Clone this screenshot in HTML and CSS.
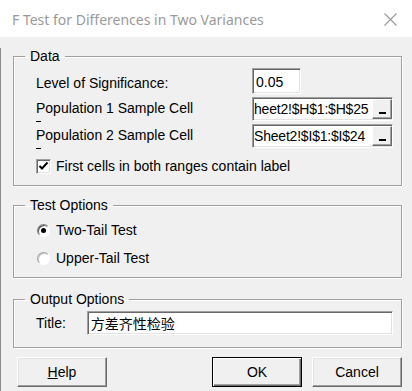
FILE: index.html
```html
<!DOCTYPE html>
<html lang="en">
<head>
    <meta charset="UTF-8" />
    <meta name="viewport" content="width=device-width, initial-scale=1.0" />
    <title>F Test for Differences in Two Variances</title>
    <link rel="stylesheet" href="styles.css">
</head>
<body>

<div class="dialog">
    <div class="titlebar">
        <span class="caption">F Test for Differences in Two Variances</span>
        <svg class="close" width="13" height="13" viewBox="0 0 13 13">
            <path d="M0.5 0.5 L12.5 12.5 M12.5 0.5 L0.5 12.5" stroke="#9a9a9a" stroke-width="1.1" fill="none"/>
        </svg>
    </div>

    <div class="client">
        <!-- Data -->
        <fieldset class="group data">
            <legend>Data</legend>
            <div class="data-grid">
                <label class="lbl first">Level of Significance:</label>
                <div class="edit level">0.05</div>

                <label class="lbl dashed">Population 1 Sample Cell</label>
                <div class="refedit">
                    <div class="ref-text"><span>heet2!$H$1:$H$25</span></div>
                    <span class="ref-btn"><i></i></span>
                </div>

                <label class="lbl dashed">Population 2 Sample Cell</label>
                <div class="refedit">
                    <div class="ref-text"><span>Sheet2!$I$1:$I$24</span></div>
                    <span class="ref-btn"><i></i></span>
                </div>

                <label class="check-row">
                    <span class="checkbox">
                        <svg width="11" height="11" viewBox="0 0 11 11">
                            <path d="M1.5 5 L4 7.5 L9.5 1.5" stroke="#000" stroke-width="2" fill="none"/>
                        </svg>
                    </span>
                    First cells in both ranges contain label
                </label>
            </div>
        </fieldset>

        <!-- Test Options -->
        <fieldset class="group tests">
            <legend>Test Options</legend>
            <label class="radio-row"><span class="radio checked"></span>Two-Tail Test</label>
            <label class="radio-row"><span class="radio"></span>Upper-Tail Test</label>
        </fieldset>

        <!-- Output Options -->
        <fieldset class="group output">
            <legend>Output Options</legend>
            <div class="title-row">
                <label class="title-lbl">Title:</label>
                <div class="edit title-edit">方差齐性检验</div>
            </div>
        </fieldset>

        <div class="buttons">
            <button class="btn help"><u>H</u>elp</button>
            <button class="btn default">OK</button>
            <button class="btn">Cancel</button>
        </div>
    </div>
</div>

</body>
</html>
```

FILE: styles.css
```css
* {
    box-sizing: border-box;
}
body {
    margin: 0;
    background: #f0f0f0;
    font-family: "Liberation Sans", Arial, sans-serif;
    font-size: 14px;
    color: #000;
}
.dialog {
    width: 412px;
    height: 391px;
    overflow: hidden;
    background: #f0f0f0;
}
.titlebar {
    height: 37px;
    background: #fff;
    display: flex;
    align-items: center;
    justify-content: space-between;
    padding: 0 15px 0 12px;
}
.caption {
    font-family: "Noto Sans", sans-serif;
    font-size: 14px;
    color: #9a9a9a;
    padding-top: 1px;
}
.close {
    margin-top: 1px;
}
.client {
    height: 354px;
    border-left: 1px solid #8c8c8c;
    padding: 0 10px 0 12px;
}

/* Group boxes */
.group {
    margin: 0;
    min-width: 0;
    border: 1px solid #a0a0a0;
    box-shadow: inset 1px 1px 0 #fff, 1px 1px 0 #fff;
    padding: 4px 8px 8px 22px;
}
.group legend {
    margin-left: -11px;
    padding: 0 5px;
    line-height: 16px;
}
.data {
    margin-top: 11px;
}
.tests {
    margin-top: 11px;
    padding-top: 3px;
    padding-bottom: 5px;
}
.output {
    margin-top: 13px;
    padding-bottom: 12px;
}

/* Data grid */
.data-grid {
    display: grid;
    grid-template-columns: 216px 141px;
    grid-template-rows: 26px 24px 24px 26px;
    row-gap: 3px;
}
.lbl {
    line-height: 15px;
    padding-top: 4px;
}
.lbl.first {
    padding-top: 8px;
}
.lbl.dashed::after {
    content: "";
    display: block;
    width: 5px;
    height: 1px;
    margin-top: 5px;
    background: #000;
}

.edit {
    background: #fff;
    border: 1px solid;
    border-color: #a0a0a0 #fff #fff #a0a0a0;
    box-shadow: inset 1px 1px 0 #696969, inset -1px -1px 0 #e3e3e3;
    line-height: 15px;
    white-space: nowrap;
    overflow: hidden;
}
.level {
    width: 49px;
    padding: 6px 3px 0;
}

.refedit {
    display: flex;
    background: #fff;
    border: 1px solid;
    border-color: #a0a0a0 #fff #fff #a0a0a0;
    box-shadow: inset 1px 1px 0 #696969, inset -1px -1px 0 #e3e3e3;
    padding: 1px 0 1px 1px;
}
.ref-text {
    flex: 1;
    overflow: hidden;
    white-space: nowrap;
    display: flex;
    align-items: center;
    letter-spacing: -0.2px;
}
.ref-btn {
    width: 20px;
    background: #f0f0f0;
    border: 1px solid;
    border-color: #fff #696969 #696969 #fff;
    box-shadow: inset -1px -1px 0 #a0a0a0;
    display: flex;
    justify-content: center;
    align-items: flex-end;
    padding-bottom: 4px;
}
.ref-btn i {
    width: 7px;
    height: 2px;
    background: #000;
}

.check-row {
    grid-column: 1 / 3;
    display: flex;
    align-items: center;
    gap: 5px;
    padding-top: 4px;
    white-space: nowrap;
}
.checkbox {
    width: 15px;
    height: 15px;
    background: #fff;
    border: 1px solid;
    border-color: #a0a0a0 #fff #fff #a0a0a0;
    box-shadow: inset 1px 1px 0 #696969, inset -1px -1px 0 #e3e3e3;
    display: flex;
    justify-content: center;
    align-items: center;
}

/* Radios */
.radio-row {
    height: 28px;
    display: flex;
    align-items: center;
    gap: 6px;
    padding-left: 1px;
}
.radio {
    width: 13px;
    height: 13px;
    border-radius: 50%;
    background: #fff;
    border: 1px solid;
    border-color: #a0a0a0 #fff #fff #a0a0a0;
    box-shadow: inset 1px 1px 0 #c8c8c8;
    display: flex;
    justify-content: center;
    align-items: center;
}
.radio.checked {
    border-color: #808080 #fff #fff #808080;
    box-shadow: inset 1px 1px 0 #505050;
}
.radio.checked::after {
    content: "";
    width: 5px;
    height: 5px;
    border-radius: 50%;
    background: #000;
}

/* Output */
.title-row {
    display: flex;
    align-items: center;
}
.title-lbl {
    width: 51px;
}
.title-edit {
    width: 307px;
    height: 24px;
    padding: 3px 3px 0;
    font-family: "Noto Sans CJK SC", sans-serif;
    font-size: 14px;
    line-height: 17px;
}

/* Buttons */
.buttons {
    display: flex;
    gap: 10px;
    margin-top: 9px;
    padding-left: 4px;
}
.btn {
    width: 90px;
    height: 30px;
    padding: 0;
    font-family: inherit;
    font-size: 14px;
    color: #000;
    background: #f0f0f0;
    border: 1px solid;
    border-color: #fff #696969 #696969 #fff;
    box-shadow: inset -1px -1px 0 #a0a0a0, inset 1px 1px 0 #e3e3e3;
}
.btn.help {
    margin-right: auto;
}
.btn.default {
    border: 1px solid #000;
    box-shadow: inset 1px 1px 0 #fff, inset -1px -1px 0 #696969, inset -2px -2px 0 #a0a0a0;
}
```
